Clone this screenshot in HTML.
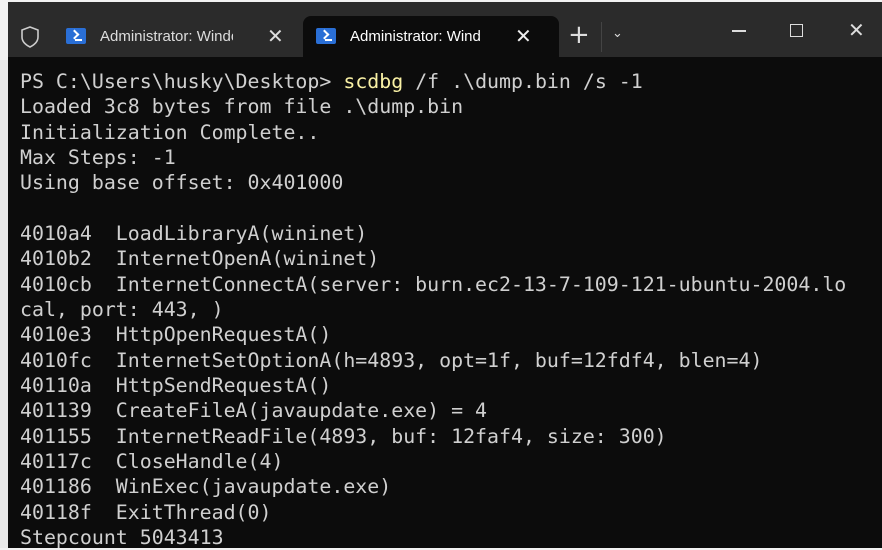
<!DOCTYPE html>
<html><head><style>
html,body{margin:0;padding:0;width:882px;height:548px;overflow:hidden;background:#f2f2f2;}
#win{position:absolute;left:8px;top:2px;width:874px;height:546px;background:#0c0c0c;}
#bar{position:absolute;left:0;top:0;width:874px;height:55px;background:#2b2b2b;}
#tab{position:absolute;left:295px;top:14px;width:256px;height:44px;background:#0c0c0c;border-radius:8px 8px 0 0;}
.t{position:absolute;font-family:"Liberation Sans",sans-serif;font-size:15px;color:#ddd;top:26px;}
.ps{position:absolute;top:26px;width:20px;height:16px;background:#2a6fd6;border-radius:2px;}
.ps:after{content:"";position:absolute;left:5px;top:3px;width:5px;height:5px;border-right:2px solid #fff;border-bottom:2px solid #fff;transform:rotate(-45deg);}
.ps:before{content:"";position:absolute;left:9px;top:11px;width:7px;height:2px;background:#fff;}
pre{position:absolute;left:12px;top:67px;margin:0;font-family:"DejaVu Sans Mono","Liberation Mono",monospace;font-size:19.9px;line-height:25.33px;color:#d0d0d0;}
.y{color:#f9f1a5;}
.ic{position:absolute;color:#ddd;font-family:"DejaVu Sans",sans-serif;}
#left{position:absolute;left:0;top:60px;width:8px;height:488px;background:#e8e8e8;}
</style></head><body>
<div id="left"></div>
<div id="win">
<div id="bar"></div>
<svg style="position:absolute;left:12px;top:24px" width="20" height="22" viewBox="0 0 20 22"><path d="M10 1 L18 4 V11 C18 16 14 19 10 21 C6 19 2 16 2 11 V4 Z" fill="none" stroke="#ccc" stroke-width="1.6"/></svg>
<div class="ps" style="left:58px"></div>
<div class="t" style="left:92px;width:133px;overflow:hidden;white-space:nowrap">Administrator: Windows</div>
<div class="ic" style="left:259px;top:22px;font-size:20px">✕</div>
<div id="tab"></div>
<div class="ps" style="left:308px"></div>
<div class="t" style="left:342px;color:#fff;width:150px;overflow:hidden;white-space:nowrap">Administrator: Wind</div>
<div class="ic" style="left:507px;top:22px;font-size:20px;color:#eee">✕</div>
<div class="ic" style="left:560px;top:18px;font-size:26px">+</div>
<div style="position:absolute;left:593px;top:20px;width:1px;height:30px;background:#444"></div>
<div class="ic" style="left:604px;top:24px;font-size:13px">⌄</div>
<div style="position:absolute;left:724px;top:28px;width:14px;height:1.5px;background:#ddd"></div>
<div style="position:absolute;left:782px;top:22px;width:11px;height:11px;border:1.5px solid #ddd"></div>
<div class="ic" style="left:840px;top:16px;font-size:20px">✕</div>
<pre>PS C:\Users\husky\Desktop> <span class="y">scdbg</span> /f .\dump.bin /s -1
Loaded 3c8 bytes from file .\dump.bin
Initialization Complete..
Max Steps: -1
Using base offset: 0x401000

4010a4  LoadLibraryA(wininet)
4010b2  InternetOpenA(wininet)
4010cb  InternetConnectA(server: burn.ec2-13-7-109-121-ubuntu-2004.lo
cal, port: 443, )
4010e3  HttpOpenRequestA()
4010fc  InternetSetOptionA(h=4893, opt=1f, buf=12fdf4, blen=4)
40110a  HttpSendRequestA()
401139  CreateFileA(javaupdate.exe) = 4
401155  InternetReadFile(4893, buf: 12faf4, size: 300)
40117c  CloseHandle(4)
401186  WinExec(javaupdate.exe)
40118f  ExitThread(0)
Stepcount 5043413</pre>
</div>
</body></html>
